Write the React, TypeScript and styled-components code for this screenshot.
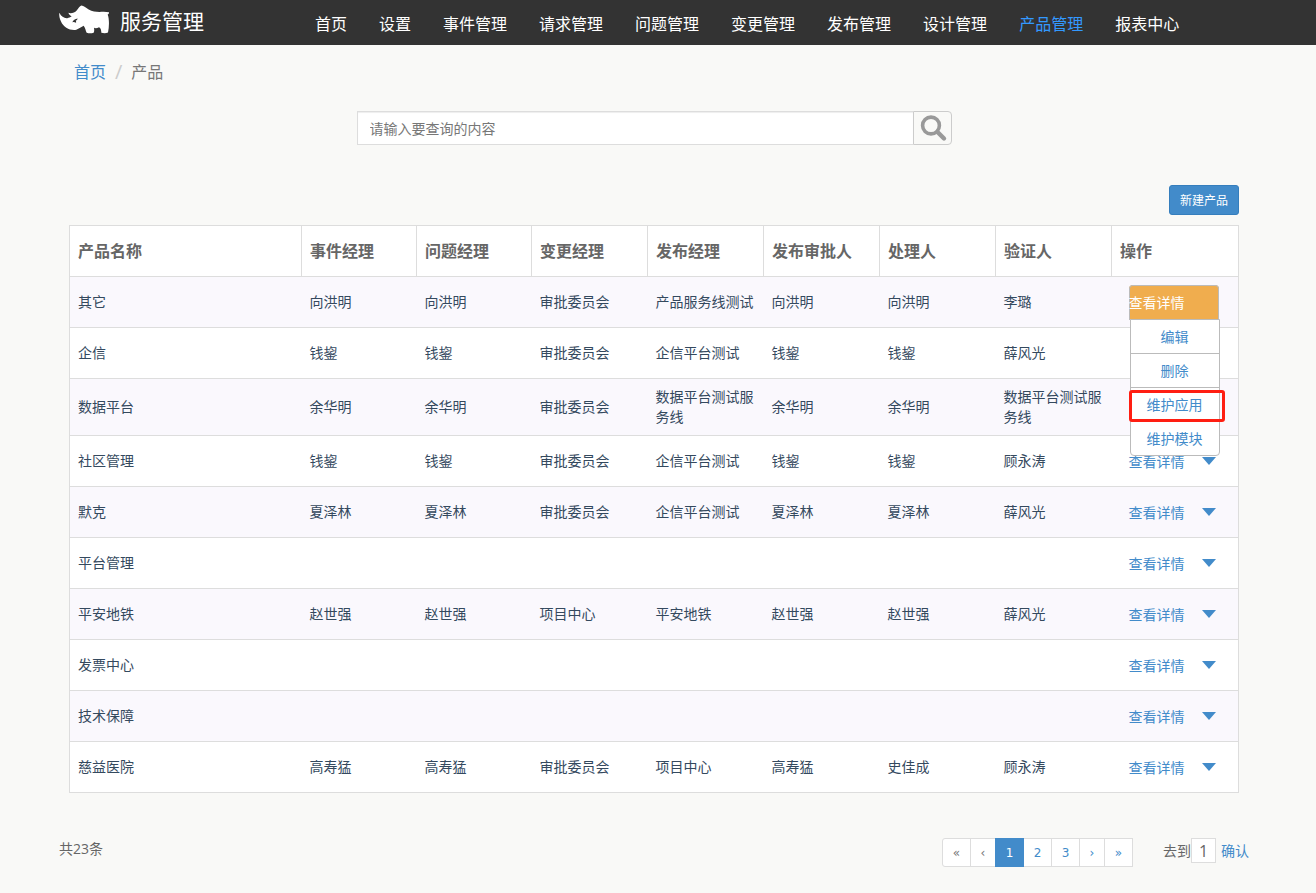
import React from "react";
import styled, { createGlobalStyle, css } from "styled-components";

const GlobalStyle = createGlobalStyle`
  *, *::before, *::after { box-sizing: border-box; }
  body {
    margin: 0;
    background: #f9f9f7;
    color: #666;
    font-family: "Open Sans", "Noto Sans CJK SC", sans-serif;
    font-size: 14px;
    line-height: 20px;
  }
  a { color: #428bca; text-decoration: none; }
  button, input { font: inherit; }
`;

const Header = styled.header`
  background: #333;
  padding-right: 8px;
`;

const HeaderInner = styled.div`
  display: flex;
  align-items: center;
  max-width: 1190px;
  height: 45px;
  margin: 0 auto;
`;

const Brand = styled.a`
  display: flex;
  align-items: center;
  gap: 11px;
  width: 240px;
  height: 45px;
  padding-bottom: 3px;
  flex: none;
  color: #fff;
  font-size: 21px;
  line-height: 24px;
`;

const RhinoMark = styled.svg`
  width: 50px;
  height: 29px;
  margin-bottom: 4px;
  fill: #fff;
`;

const Nav = styled.nav`
  display: flex;
  padding-top: 3px;
`;

const NavLink = styled.a<{ $active?: boolean }>`
  padding: 0 16px;
  font-size: 16px;
  line-height: 24px;
  white-space: nowrap;
  color: ${(p) => (p.$active ? "#3399ff" : "#fff")};
`;

const Page = styled.div`
  padding-right: 8px;
`;

const Main = styled.main`
  max-width: 1190px;
  margin: 0 auto;
  padding: 16px 0;
`;

const Content = styled.div`
  padding: 0 10px;
`;

const Breadcrumb = styled.nav`
  display: flex;
  gap: 9px;
  padding: 0 5px;
  font-size: 16px;
  line-height: 22px;
  color: #777;
`;

const Slash = styled.span`
  font-size: 20px;
  color: #ccc;
`;

const SearchForm = styled.form`
  display: flex;
  max-width: 595px;
  height: 34px;
  margin: 28px auto 40px;
`;

const SearchInput = styled.input`
  flex: 1;
  min-width: 0;
  padding: 2px 12px 0;
  border: 1px solid #ddd;
  border-right: 0;
  border-radius: 0;
  background: #fff;
  box-shadow: inset 0 1px 1px rgba(0, 0, 0, 0.07);
  color: #555;
  &::placeholder { color: #777; opacity: 1; }
`;

const SearchButton = styled.button`
  width: 39px;
  padding: 0 0 0 6px;
  border: 1px solid #ccc;
  border-radius: 0 4px 4px 0;
  background: #f9f9f7;
  cursor: pointer;
  svg { display: block; }
`;

const Toolbar = styled.div`
  display: flex;
  justify-content: flex-end;
  margin-bottom: 10px;
`;

const PrimaryButton = styled.button`
  height: 30px;
  padding: 2px 10px 0;
  border: 1px solid #357ebd;
  border-radius: 3px;
  background: #428bca;
  color: #fff;
  font-size: 12px;
  line-height: 18px;
  cursor: pointer;
`;

const Table = styled.table`
  width: 100%;
  table-layout: fixed;
  border-collapse: collapse;
  border: 1px solid #ddd;
  background: #fff;
`;

const Column = styled.col<{ $width: number }>`
  width: ${(p) => p.$width}px;
`;

const HeadCell = styled.th`
  height: 51px;
  padding: 8px;
  border: 1px solid #ddd;
  text-align: left;
  font-size: 16px;
  font-weight: bold;
  color: #666;
`;

const Row = styled.tr`
  border-top: 1px solid #ddd;
  &:nth-child(odd) { background: #faf8fd; }
`;

const Cell = styled.td`
  height: 51px;
  padding: 8px;
  color: #34495e;
`;

const ActionCell = styled(Cell)`
  padding: 0 0 0 17px;
`;

const ActionGroup = styled.div<{ $open?: boolean; $covered?: boolean }>`
  position: relative;
  display: flex;
  align-items: center;
  width: 90px;
  height: 35px;
  padding-top: 2px;
  border-radius: 4px 4px 0 0;
  visibility: ${(p) => (p.$covered ? "hidden" : "visible")};
  ${(p) =>
    p.$open &&
    css`
      background: #f0ad4e;
      box-shadow: inset 0 0 0 1px #bbb;
    `}
`;

const DetailButton = styled.button<{ $open?: boolean }>`
  padding: 0;
  border: 0;
  background: none;
  color: ${(p) => (p.$open ? "#fff" : "#428bca")};
  cursor: pointer;
`;

const CaretButton = styled.button<{ $open?: boolean }>`
  margin-left: 17px;
  padding: 0 0 2px;
  border: 0;
  background: none;
  color: ${(p) => (p.$open ? "#f0ad4e" : "#428bca")};
  cursor: pointer;
  svg { display: block; fill: currentColor; }
`;

const Menu = styled.ul`
  position: absolute;
  z-index: 2;
  top: 34px;
  left: 1px;
  width: 90px;
  margin: 0;
  padding: 0;
  list-style: none;
  border: 1px solid #bbb;
  border-radius: 0 0 4px 4px;
  background: #fff;
`;

const MenuItem = styled.li<{ $marked?: boolean }>`
  position: relative;
  text-align: center;
  line-height: 33px;
  & + & { border-top: 1px solid #bbb; }
  a { display: block; }
  ${(p) =>
    p.$marked &&
    css`
      &::after {
        content: "";
        position: absolute;
        z-index: 1;
        inset: 2px -6px -1px -2px;
        border: 3px solid #ff1e12;
        border-radius: 3px;
        pointer-events: none;
      }
    `}
`;

const Footer = styled.footer`
  display: flex;
  align-items: flex-start;
  margin-top: 45px;
`;

const Total = styled.span`
  margin-right: auto;
  line-height: 22px;
`;

const Pagination = styled.nav`
  display: flex;
  margin-right: 30px;
  font-family: "DejaVu Sans", sans-serif;
  font-size: 12px;
`;

const PageButton = styled.button<{ $narrow?: boolean; $active?: boolean; $muted?: boolean }>`
  width: ${(p) => (p.$narrow ? 26 : 29)}px;
  height: 29px;
  padding: 0;
  border: 1px solid ${(p) => (p.$active ? "#428bca" : "#ddd")};
  background: ${(p) => (p.$active ? "#428bca" : "#fff")};
  color: ${(p) => (p.$active ? "#fff" : p.$muted ? "#777" : "#428bca")};
  position: relative;
  z-index: ${(p) => (p.$active ? 1 : 0)};
  cursor: pointer;
  & + & { margin-left: -1px; }
  &:first-child { border-radius: 3px 0 0 3px; }
`;

const JumpForm = styled.form`
  display: flex;
  align-items: center;
  height: 25px;
`;

const JumpInput = styled.input`
  width: 25px;
  height: 25px;
  margin-right: 5px;
  padding: 0;
  border: 1px solid #ddd;
  background: #fff;
  color: #666;
  font-size: 16px;
  text-align: center;
`;

const LinkButton = styled.button`
  padding: 0;
  border: 0;
  background: none;
  color: #428bca;
  cursor: pointer;
`;

const navItems = [
  "首页", "设置", "事件管理", "请求管理", "问题管理", "变更管理",
  "发布管理", "设计管理", "产品管理", "报表中心",
];

const columns = [
  { title: "产品名称", width: 232 },
  { title: "事件经理", width: 115 },
  { title: "问题经理", width: 115 },
  { title: "变更经理", width: 116 },
  { title: "发布经理", width: 116 },
  { title: "发布审批人", width: 116 },
  { title: "处理人", width: 116 },
  { title: "验证人", width: 116 },
  { title: "操作", width: 127 },
];

const rows = [
  ["其它", "向洪明", "向洪明", "审批委员会", "产品服务线测试", "向洪明", "向洪明", "李璐"],
  ["企信", "钱鋆", "钱鋆", "审批委员会", "企信平台测试", "钱鋆", "钱鋆", "薛风光"],
  ["数据平台", "余华明", "余华明", "审批委员会", "数据平台测试服务线", "余华明", "余华明", "数据平台测试服务线"],
  ["社区管理", "钱鋆", "钱鋆", "审批委员会", "企信平台测试", "钱鋆", "钱鋆", "顾永涛"],
  ["默克", "夏泽林", "夏泽林", "审批委员会", "企信平台测试", "夏泽林", "夏泽林", "薛风光"],
  ["平台管理", "", "", "", "", "", "", ""],
  ["平安地铁", "赵世强", "赵世强", "项目中心", "平安地铁", "赵世强", "赵世强", "薛风光"],
  ["发票中心", "", "", "", "", "", "", ""],
  ["技术保障", "", "", "", "", "", "", ""],
  ["慈益医院", "高寿猛", "高寿猛", "审批委员会", "项目中心", "高寿猛", "史佳成", "顾永涛"],
];

const menuItems = ["编辑", "删除", "维护应用", "维护模块"];
const markedItem = "维护应用";
const openRow = 0;
// The open menu lies over the actions of this many rows below it.
const coveredRows = 2;

const pages = [
  { label: "«", name: "第一页", muted: true },
  { label: "‹", name: "上一页", narrow: true, muted: true },
  { label: "1", name: "第1页", active: true },
  { label: "2", name: "第2页" },
  { label: "3", name: "第3页" },
  { label: "›", name: "下一页", narrow: true },
  { label: "»", name: "最后一页" },
];

function Rhino() {
  return (
    <RhinoMark viewBox="14 13 150 86" aria-hidden="true">
      <path
        fillRule="evenodd"
        d="M15 36 C21 48 30 53 39 52 C44 51 47 49 52 47 C48 45 44 42 42 36 C50 39 61 36 67 29 C73 21 76 16 81 14 C88 15 96 22 103 26 C118 35 135 33 148 33 L165 34 C165 38 162 40 160 41 C165 53 165 76 161 95 Q153 99 141 96 C141 88 139 81 134 79 Q126 84 119 81 C120 86 120 91 118 96 Q107 99 97 96 C94 90 93 82 88 75 C81 79 74 83 66 87 C47 90 28 80 20 62 C15 52 14 43 15 36 Z M54 64 Q58 55 70 53 Q69 58 64 60 Q66 62 65 66 Q59 62 54 64 Z"
      />
    </RhinoMark>
  );
}

function Actions({ open, covered }: { open: boolean; covered: boolean }) {
  return (
    <ActionGroup $open={open} $covered={covered}>
      <DetailButton type="button" $open={open}>查看详情</DetailButton>
      <CaretButton type="button" $open={open} aria-label="更多操作" aria-expanded={open}>
        <svg width="14" height="8" viewBox="0 0 14 8"><path d="M0 0H14L7 8Z" /></svg>
      </CaretButton>
      {open && (
        <Menu>
          {menuItems.map((item) => (
            <MenuItem key={item} $marked={item === markedItem}>
              <a href="#">{item}</a>
            </MenuItem>
          ))}
        </Menu>
      )}
    </ActionGroup>
  );
}

export default function App() {
  return (
    <>
      <GlobalStyle />
      <Header>
        <HeaderInner>
          <Brand href="#">
            <Rhino />
            <span>服务管理</span>
          </Brand>
          <Nav>
            {navItems.map((item) => (
              <NavLink key={item} href="#" $active={item === "产品管理"}>{item}</NavLink>
            ))}
          </Nav>
        </HeaderInner>
      </Header>
      <Page>
        <Main>
          <Content>
            <Breadcrumb>
              <a href="#">首页</a>
              <Slash>/</Slash>
              <span>产品</span>
            </Breadcrumb>
            <SearchForm onSubmit={(e) => e.preventDefault()}>
              <SearchInput type="text" aria-label="查询" placeholder="请输入要查询的内容" />
              <SearchButton type="submit" aria-label="搜索">
                <svg width="28" height="28" viewBox="0 0 28 28" fill="none" stroke="#999">
                  <circle cx="11" cy="11.5" r="8.4" strokeWidth="3.6" />
                  <path d="M17.5 18L24 24.5" strokeWidth="4.4" strokeLinecap="round" />
                </svg>
              </SearchButton>
            </SearchForm>
            <Toolbar>
              <PrimaryButton type="button">新建产品</PrimaryButton>
            </Toolbar>
            <Table>
              <colgroup>
                {columns.map((c) => <Column key={c.title} $width={c.width} />)}
              </colgroup>
              <thead>
                <tr>
                  {columns.map((c) => <HeadCell key={c.title} scope="col">{c.title}</HeadCell>)}
                </tr>
              </thead>
              <tbody>
                {rows.map((cells, i) => (
                  <Row key={cells[0]}>
                    {cells.map((text, j) => <Cell key={j}>{text}</Cell>)}
                    <ActionCell>
                      <Actions
                        open={i === openRow}
                        covered={i > openRow && i <= openRow + coveredRows}
                      />
                    </ActionCell>
                  </Row>
                ))}
              </tbody>
            </Table>
          </Content>
          <Footer>
            <Total>共23条</Total>
            <Pagination aria-label="分页">
              {pages.map((p) => (
                <PageButton
                  key={p.label}
                  type="button"
                  aria-label={p.name}
                  $narrow={p.narrow}
                  $active={p.active}
                  $muted={p.muted}
                >
                  {p.label}
                </PageButton>
              ))}
            </Pagination>
            <JumpForm onSubmit={(e) => e.preventDefault()}>
              <label htmlFor="jump-page">去到</label>
              <JumpInput id="jump-page" type="text" defaultValue="1" />
              <LinkButton type="submit">确认</LinkButton>
            </JumpForm>
          </Footer>
        </Main>
      </Page>
    </>
  );
}
